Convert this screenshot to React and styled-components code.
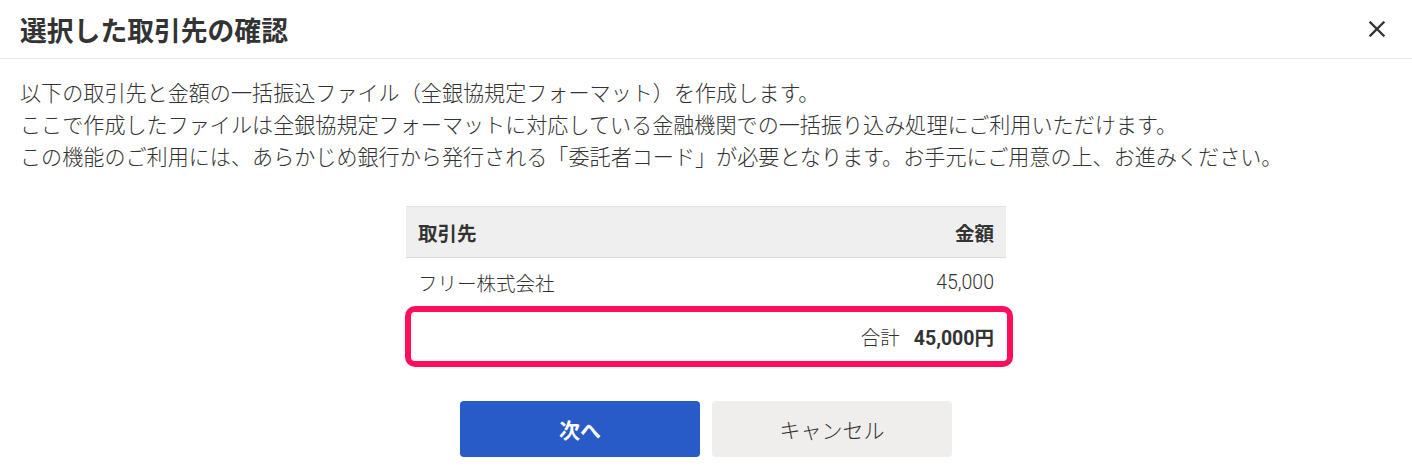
import React from "react";
import styled, { createGlobalStyle } from "styled-components";

const GlobalStyle = createGlobalStyle`
  body {
    margin: 0;
    background: #fff;
    color: #333;
    font-family: Roboto, "Noto Sans CJK JP", sans-serif;
  }
`;

const Dialog = styled.div`
  width: 1412px;
  height: 470px;
  background: #fff;
  overflow: hidden;
`;

const Header = styled.div`
  height: 58px;
  padding: 0 20px;
  display: flex;
  align-items: center;
  justify-content: space-between;
  border-bottom: 1px solid #e9e9e9;
`;

const Title = styled.h1`
  margin: 0;
  font-size: 26.8px;
  font-weight: 700;
  color: #333;
`;

const CloseButton = styled.button`
  width: 30px;
  height: 30px;
  padding: 0;
  border: none;
  background: none;
  display: flex;
  align-items: center;
  justify-content: center;
  color: #333;
`;

const Body = styled.div`
  padding: 19px 20px 0;
`;

const Description = styled.p`
  margin: 0;
  font-size: 21.1px;
  font-weight: 300;
  line-height: 32px;
  color: #333;
  white-space: nowrap;
`;

const Table = styled.div`
  width: 600px;
  margin: 32px auto 0;
  font-size: 19.5px;
`;

const Row = styled.div`
  height: ${(p) => p.$height}px;
  padding: 0 12px;
  display: flex;
  align-items: center;
  justify-content: ${(p) => p.$justify || "space-between"};
  background: ${(p) => (p.$head ? "#efefef" : "#fff")};
  border-top: ${(p) => (p.$head ? "1px solid #e2e2e2" : "none")};
  border-bottom: ${(p) => (p.$head ? "1px solid #dcdcdc" : "none")};
  font-weight: ${(p) => (p.$head ? 700 : 300)};
  position: relative;
`;

const Highlight = styled.div`
  position: absolute;
  top: 0;
  bottom: 0;
  left: -1px;
  right: -7px;
  border: 6px solid #ff0f5b;
  border-radius: 10px;
  pointer-events: none;
`;

const TotalLabel = styled.span`
  margin-right: 14px;
`;

const TotalValue = styled.span`
  font-weight: 700;
`;

const Actions = styled.div`
  margin-top: 34px;
  display: flex;
  justify-content: center;
  gap: 12px;
`;

const Button = styled.button`
  width: 240px;
  height: 56px;
  border: none;
  border-radius: 4px;
  font-family: Roboto, "Noto Sans CJK JP", sans-serif;
  font-size: 21px;
  font-weight: ${(p) => (p.$primary ? 700 : 300)};
  color: ${(p) => (p.$primary ? "#fff" : "#333")};
  background: ${(p) => (p.$primary ? "#285bc7" : "#efeeec")};
`;

const CloseIcon = () => (
  <svg width="16" height="16" viewBox="0 0 16 16" fill="none">
    <path
      d="M1.5 1.5 L14.5 14.5 M14.5 1.5 L1.5 14.5"
      stroke="currentColor"
      strokeWidth="2.3"
      strokeLinecap="square"
    />
  </svg>
);

const App = () => {
  return (
    <Dialog>
      <GlobalStyle />
      <Header>
        <Title>選択した取引先の確認</Title>
        <CloseButton aria-label="閉じる">
          <CloseIcon />
        </CloseButton>
      </Header>
      <Body>
        <Description>
          以下の取引先と金額の一括振込ファイル（全銀協規定フォーマット）を作成します。
        </Description>
        <Description>
          ここで作成したファイルは全銀協規定フォーマットに対応している金融機関での一括振り込み処理にご利用いただけます。
        </Description>
        <Description>
          この機能のご利用には、あらかじめ銀行から発行される「委託者コード」が必要となります。お手元にご用意の上、お進みください。
        </Description>
        <Table>
          <Row $head $height={50}>
            <span>取引先</span>
            <span>金額</span>
          </Row>
          <Row $height={48}>
            <span>フリー株式会社</span>
            <span>45,000</span>
          </Row>
          <Row $height={61} $justify="flex-end">
            <TotalLabel>合計</TotalLabel>
            <TotalValue>45,000円</TotalValue>
            <Highlight />
          </Row>
        </Table>
        <Actions>
          <Button $primary>次へ</Button>
          <Button>キャンセル</Button>
        </Actions>
      </Body>
    </Dialog>
  );
};

export default App;
